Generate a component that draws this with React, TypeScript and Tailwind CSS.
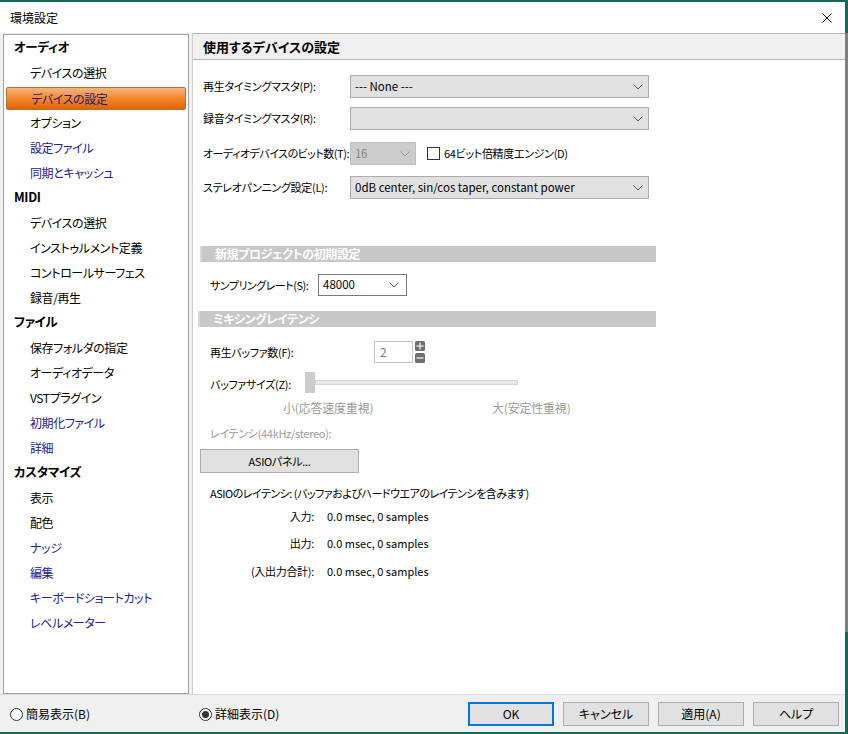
const font = "font-['Noto_Sans_CJK_JP',sans-serif] [font-feature-settings:'palt'] whitespace-nowrap";

type NavItem = { label: string; header?: boolean; selected?: boolean; blue?: boolean };

const navItems: NavItem[] = [
  { label: 'オーディオ', header: true },
  { label: 'デバイスの選択' },
  { label: 'デバイスの設定', selected: true },
  { label: 'オプション' },
  { label: '設定ファイル', blue: true },
  { label: '同期とキャッシュ', blue: true },
  { label: 'MIDI', header: true },
  { label: 'デバイスの選択' },
  { label: 'インストゥルメント定義' },
  { label: 'コントロールサーフェス' },
  { label: '録音/再生' },
  { label: 'ファイル', header: true },
  { label: '保存フォルダの指定' },
  { label: 'オーディオデータ' },
  { label: 'VSTプラグイン' },
  { label: '初期化ファイル', blue: true },
  { label: '詳細', blue: true },
  { label: 'カスタマイズ', header: true },
  { label: '表示' },
  { label: '配色' },
  { label: 'ナッジ', blue: true },
  { label: '編集', blue: true },
  { label: 'キーボードショートカット', blue: true },
  { label: 'レベルメーター', blue: true },
];

const Chevron = ({ color = '#5a5a5a' }: { color?: string }) => (
  <svg width="10" height="6" viewBox="0 0 10 6">
    <path d="M0.5 0.5 L5 5 L9.5 0.5" fill="none" stroke={color} strokeWidth="1" />
  </svg>
);

const Sidebar = () => (
  <div className="w-[186px] h-[660px] border border-[#a0a0a0] bg-white">
    {navItems.map((item, i) => {
      if (item.header) {
        return (
          <div key={i} className="h-[25px] flex items-center pl-[10px] text-[12.5px] tracking-[-0.3px] font-bold text-black">
            {item.label}
          </div>
        );
      }
      if (item.selected) {
        return (
          <div key={i} className="h-[25px] pt-[2px] px-[2px]">
            <div className="h-[23px] flex items-center pl-[24px] rounded-[2px] border border-[#a8763e] bg-gradient-to-b from-[#f6b47a] via-[#f5862a] to-[#e06400] text-[12px] tracking-[-0.4px] text-[#1c1c78]">
              {item.label}
            </div>
          </div>
        );
      }
      return (
        <div
          key={i}
          className={`h-[25px] flex items-center pl-[26px] text-[12px] tracking-[-0.4px] ${item.blue ? 'text-[#20209a]' : 'text-black'}`}
        >
          {item.label}
        </div>
      );
    })}
  </div>
);

const Select = ({ text, width }: { text: string; width: string }) => (
  <div className={`${width} shrink-0 h-[23px] bg-[#e1e1e1] border border-[#adadad] flex items-center justify-between pl-[4px] pr-[5px] text-[11.5px] tracking-normal text-black`}>
    <span>{text}</span>
    <Chevron />
  </div>
);

const SectionBar = ({ label, className }: { label: string; className: string }) => (
  <div className={`${className} h-[16px] bg-[#c8c8c8] border-l-2 border-[#d8d8d8] flex items-center pl-[13px] text-[12px] tracking-[-0.4px] font-bold text-white`}>
    {label}
  </div>
);

const Radio = ({ checked }: { checked?: boolean }) => (
  <div className="w-[13px] h-[13px] rounded-full border border-[#333] bg-white flex items-center justify-center">
    {checked && <div className="w-[7px] h-[7px] rounded-full bg-[#333]" />}
  </div>
);

const LatencyRow = ({ label, className }: { label: string; className: string }) => (
  <div className={`${className} h-[16px] flex items-center text-black`}>
    <div className="w-[121px] text-right">{label}</div>
    <div className="ml-[13px] tracking-normal">0.0 msec, 0 samples</div>
  </div>
);

const DeviceSettings = () => (
  <div className="flex-1 h-[661px] bg-white border-l border-[#cfcfcf] flex flex-col text-[11px] tracking-[-0.3px]">
    <div className="h-[27px] bg-[#f0f0f0] border-y border-[#b4b4b4] flex items-center pl-[10px] text-[13px] tracking-normal font-bold text-black">
      使用するデバイスの設定
    </div>

    <div className="pl-[10px] text-black">
      <div className="mt-[15px] flex items-center">
        <div className="w-[147px] shrink-0">再生タイミングマスタ(P):</div>
        <Select text="--- None ---" width="w-[299px]" />
      </div>
      <div className="mt-[9px] flex items-center">
        <div className="w-[147px] shrink-0">録音タイミングマスタ(R):</div>
        <Select text="" width="w-[299px]" />
      </div>
      <div className="mt-[12px] flex items-center">
        <div className="w-[147px] shrink-0 tracking-[-0.5px]">オーディオデバイスのビット数(T):</div>
        <div className="w-[66px] shrink-0 h-[23px] bg-[#cccccc] border border-[#bfbfbf] flex items-center justify-between pl-[4px] pr-[5px] text-[11.5px] text-[#838383]">
          <span>16</span>
          <Chevron color="#9a9a9a" />
        </div>
        <div className="ml-[11px] w-[13px] h-[13px] border border-[#333] bg-white" />
        <div className="ml-[4px]">64ビット倍精度エンジン(D)</div>
      </div>
      <div className="mt-[11px] flex items-center">
        <div className="w-[147px] shrink-0">ステレオパンニング設定(L):</div>
        <Select text="0dB center, sin/cos taper, constant power" width="w-[299px]" />
      </div>
    </div>

    <SectionBar label="新規プロジェクトの初期設定" className="mt-[47px] ml-[7px] w-[456px]" />

    <div className="mt-[12px] ml-[17px] flex items-center text-black">
      <div className="w-[108px] shrink-0 tracking-[-0.5px]">サンプリングレート(S):</div>
      <div className="w-[89px] h-[22px] bg-white border border-[#7a7a7a] flex items-center justify-between pl-[4px] pr-[7px] text-[11.5px] tracking-normal">
        <span>48000</span>
        <Chevron />
      </div>
    </div>

    <SectionBar label="ミキシングレイテンシ" className="mt-[15px] ml-[5px] w-[458px]" />

    <div className="mt-[14px] ml-[17px] flex items-center text-black">
      <div className="w-[164px] shrink-0">再生バッファ数(F):</div>
      <div className="w-[39px] h-[22px] border border-[#c4c4c4] flex items-center pl-[5px] text-[12px] text-[#7a7a7a]">2</div>
      <svg className="ml-[2px]" width="10" height="22" viewBox="0 0 10 22">
        <rect x="0" y="0" width="10" height="10" rx="1.5" fill="#6e6e6e" />
        <rect x="1.5" y="4.2" width="7" height="1.6" fill="#d8d8d8" />
        <rect x="4.2" y="1.5" width="1.6" height="7" fill="#d8d8d8" />
        <rect x="0" y="12" width="10" height="10" rx="1.5" fill="#6e6e6e" />
        <rect x="1.5" y="16.2" width="7" height="1.6" fill="#d8d8d8" />
      </svg>
    </div>

    <div className="mt-[9px] ml-[17px] h-[21px] flex items-center text-black">
      <div className="w-[95px] shrink-0 self-end leading-[18px]">バッファサイズ(Z):</div>
      <div className="w-[10px] h-[21px] bg-[#cdcdcd]" />
      <div className="w-[203px] h-[5px] bg-[#e7e7e7] border border-[#d6d6d6]" />
    </div>

    <div className="mt-[7px] h-[16px] flex items-center text-[12px] tracking-[-0.2px] text-[#9b9b9b]">
      <div className="ml-[90px] w-[209px]">小(応答速度重視)</div>
      <div>大(安定性重視)</div>
    </div>

    <div className="mt-[9px] ml-[17px] h-[16px] flex items-center text-[#9b9b9b]">
      レイテンシ(44kHz/stereo):
    </div>

    <div className="mt-[8px] ml-[7px] w-[159px] h-[24px] bg-[#e1e1e1] border border-[#adadad] flex items-center justify-center text-black">
      ASIOパネル...
    </div>

    <div className="mt-[12px] ml-[17px] h-[16px] flex items-center tracking-[-0.5px] text-black">
      ASIOのレイテンシ: (バッファおよびハードウエアのレイテンシを含みます)
    </div>

    <LatencyRow label="入力:" className="mt-[7px]" />
    <LatencyRow label="出力:" className="mt-[11px]" />
    <LatencyRow label="(入出力合計):" className="mt-[12px]" />
  </div>
);

const Button = ({ label, focused }: { label: string; focused?: boolean }) => (
  <div
    className={`w-[86px] h-[24px] bg-[#e1e1e1] flex items-center justify-center text-[12px] text-black ${focused ? 'border-2 border-[#0078d7]' : 'border border-[#adadad]'}`}
  >
    {label}
  </div>
);

export default function App() {
  return (
    <div className={`w-[848px] h-[734px] flex bg-[#0e6b58] ${font}`}>
      <div className="flex-1 flex flex-col mt-[2px] mb-[2px] bg-[#f0f0f0]">
        <div className="h-[31px] bg-white flex items-center justify-between pl-[10px] pr-[13px]">
          <span className="text-[12px] text-black">環境設定</span>
          <svg width="10" height="10" viewBox="0 0 10 10">
            <path d="M0.5 0.5 L9.5 9.5 M9.5 0.5 L0.5 9.5" stroke="#111" strokeWidth="1" />
          </svg>
        </div>

        <div className="h-[661px] flex pl-[3px]">
          <div className="pt-[1px]">
            <Sidebar />
          </div>
          <div className="w-[3px]" />
          <DeviceSettings />
        </div>

        <div className="flex-1 border-t border-[#dcdcdc] flex items-center pl-[10px] pr-[6px] pt-[1px] text-[12px] text-black">
          <div className="w-[189px] flex items-center gap-[3px]">
            <Radio />
            <span>簡易表示(B)</span>
          </div>
          <div className="flex items-center gap-[3px]">
            <Radio checked />
            <span>詳細表示(D)</span>
          </div>
          <div className="ml-auto flex items-center gap-[9px]">
            <Button label="OK" focused />
            <Button label="キャンセル" />
            <Button label="適用(A)" />
            <Button label="ヘルプ" />
          </div>
        </div>
      </div>
      <div className="w-[3px] flex flex-col">
        <div className="h-[33px]" />
        <div className="h-[599px] bg-[#7f7f7f]" />
      </div>
    </div>
  );
}
